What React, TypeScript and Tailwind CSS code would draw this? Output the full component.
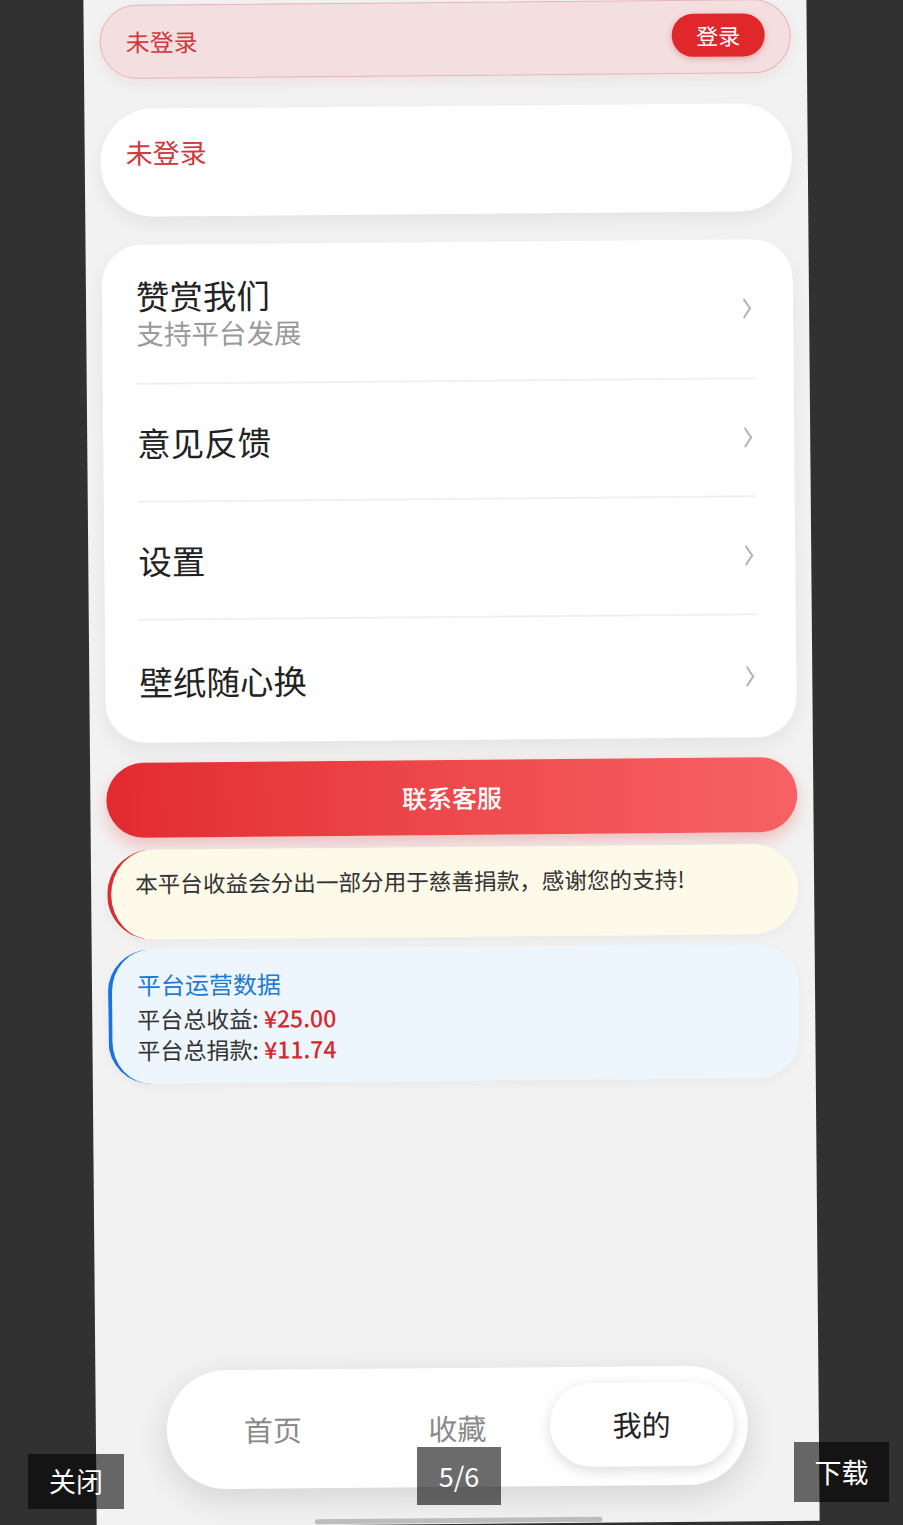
import React from "react";

const FONT = { fontFamily: '"Noto Sans CJK SC", "Noto Sans", sans-serif' };

const MENU = [
  { title: "赞赏我们", sub: "支持平台发展", h: "h-[140px]" },
  { title: "意见反馈", h: "h-[118px]" },
  { title: "设置", h: "h-[118px]" },
  { title: "壁纸随心换", h: "h-[122px]", last: true },
];

const Chevron = () => (
  <svg width="10" height="22" viewBox="0 0 10 22" fill="none">
    <path d="M2 2 Q5 7 8 11 Q5 15 2 20" stroke="#b4b4b4" strokeWidth="2" strokeLinecap="round" />
  </svg>
);

export default function App() {
  return (
    <div className="relative w-[903px] h-[1525px] overflow-hidden bg-[#313131]" style={FONT}>
      {/* phone screenshot */}
      <div className="ml-[90px] -mt-[8px] w-[723px] h-[1532px] rotate-[-0.5deg] bg-[#f2f2f2] flex flex-col px-[16px] pt-[10px]">
        {/* login banner */}
        <div className="h-[74px] shrink-0 rounded-full bg-[#f3dfe0] border border-[#e8b4b7] shadow-[0_6px_14px_rgba(200,120,120,0.12)] flex items-center justify-between pl-[25px] pr-[25px]">
          <span className="text-[24px] text-[#cf3a3e]">未登录</span>
          <div className="w-[93px] h-[43px] -mt-[4px] rounded-full bg-[#e0282c] flex items-center justify-center text-white text-[22px] shadow-[0_2px_6px_rgba(200,30,30,0.3)]">
            登录
          </div>
        </div>

        {/* user card */}
        <div className="mt-[30px] h-[108px] shrink-0 rounded-[52px] bg-white shadow-[0_8px_18px_rgba(0,0,0,0.06)] pl-[25px] pt-[26px]">
          <span className="text-[27px] leading-[36px] text-[#cf3a3e]">未登录</span>
        </div>

        {/* menu */}
        <div className="mt-[28px] h-[498px] shrink-0 rounded-[40px] bg-white shadow-[0_8px_20px_rgba(0,0,0,0.06)] flex flex-col">
          {MENU.map((m) => (
            <div
              key={m.title}
              className={`${m.h} ml-[34px] mr-[39px] flex items-center justify-between ${
                m.last ? "" : "border-b-2 border-[#f0f0f0]"
              }`}
            >
              <div className="flex flex-col">
                <span className="text-[33.5px] leading-[38px] text-[#222]">{m.title}</span>
                {m.sub && <span className="text-[27.5px] leading-[36px] text-[#9a9a9a]">{m.sub}</span>}
              </div>
              <div className="mr-[2px]">
                <Chevron />
              </div>
            </div>
          ))}
        </div>

        {/* contact */}
        <div className="mt-[20px] h-[75px] shrink-0 rounded-full bg-gradient-to-r from-[#e22a30] to-[#f86265] shadow-[0_8px_16px_rgba(230,60,60,0.28)] flex items-center justify-center">
          <span className="text-white text-[25px] font-medium">联系客服</span>
        </div>

        {/* notice */}
        <div className="mt-[12px] h-[90px] shrink-0 rounded-[45px] bg-[#fefaea] border-l-[4px] border-[#d9302f] shadow-[0_4px_12px_rgba(0,0,0,0.04)] pl-[24px] pt-[19px]">
          <p className="text-[22.6px] leading-[30px] text-[#333] whitespace-nowrap">
            本平台收益会分出一部分用于慈善捐款，感谢您的支持!
          </p>
        </div>

        {/* stats */}
        <div className="mt-[10px] h-[134px] shrink-0 rounded-[42px] bg-[#eef6fd] border-l-[4px] border-[#1a73e0] shadow-[0_4px_12px_rgba(0,0,0,0.04)] pl-[25px] pt-[19px] flex flex-col">
          <span className="text-[24px] leading-[32px] text-[#1f7ad6]">平台运营数据</span>
          <span className="text-[23px] leading-[32px] text-[#333] mt-[2px]">
            平台总收益: <span className="text-[#d8282c] font-medium">¥25.00</span>
          </span>
          <span className="text-[23px] leading-[30px] text-[#333]">
            平台总捐款: <span className="text-[#d8282c] font-medium">¥11.74</span>
          </span>
        </div>

        {/* tab bar */}
        <div className="mt-auto mx-auto w-[581px] h-[119px] shrink-0 rounded-full bg-white shadow-[0_10px_34px_rgba(0,0,0,0.13)] grid grid-cols-3 items-center px-[14px]">
          <div className="flex justify-center text-[29px] text-[#8a8a8a]">首页</div>
          <div className="flex justify-center text-[29px] text-[#8a8a8a]">收藏</div>
          <div className="h-[84px] -mt-[4px] rounded-full bg-white shadow-[0_4px_14px_rgba(0,0,0,0.14)] flex items-center justify-center text-[29px] text-[#222]">
            我的
          </div>
        </div>

        <div className="mt-[31px] mb-[1px] mx-auto w-[288px] h-[5px] shrink-0 rounded-full bg-[#bdbdbd]" />
      </div>

      {/* viewer overlays */}
      <div className="absolute left-[28px] top-[1454px] w-[96px] h-[55px] bg-black/[0.58] flex items-center justify-center text-white text-[27px]">
        关闭
      </div>
      <div className="absolute left-[417px] top-[1447px] w-[84px] h-[58px] bg-black/[0.58] flex items-center justify-center text-white text-[27px]">
        5/6
      </div>
      <div className="absolute left-[794px] top-[1442px] w-[95px] h-[60px] bg-black/[0.58] flex items-center justify-center text-white text-[27px]">
        下载
      </div>
    </div>
  );
}
